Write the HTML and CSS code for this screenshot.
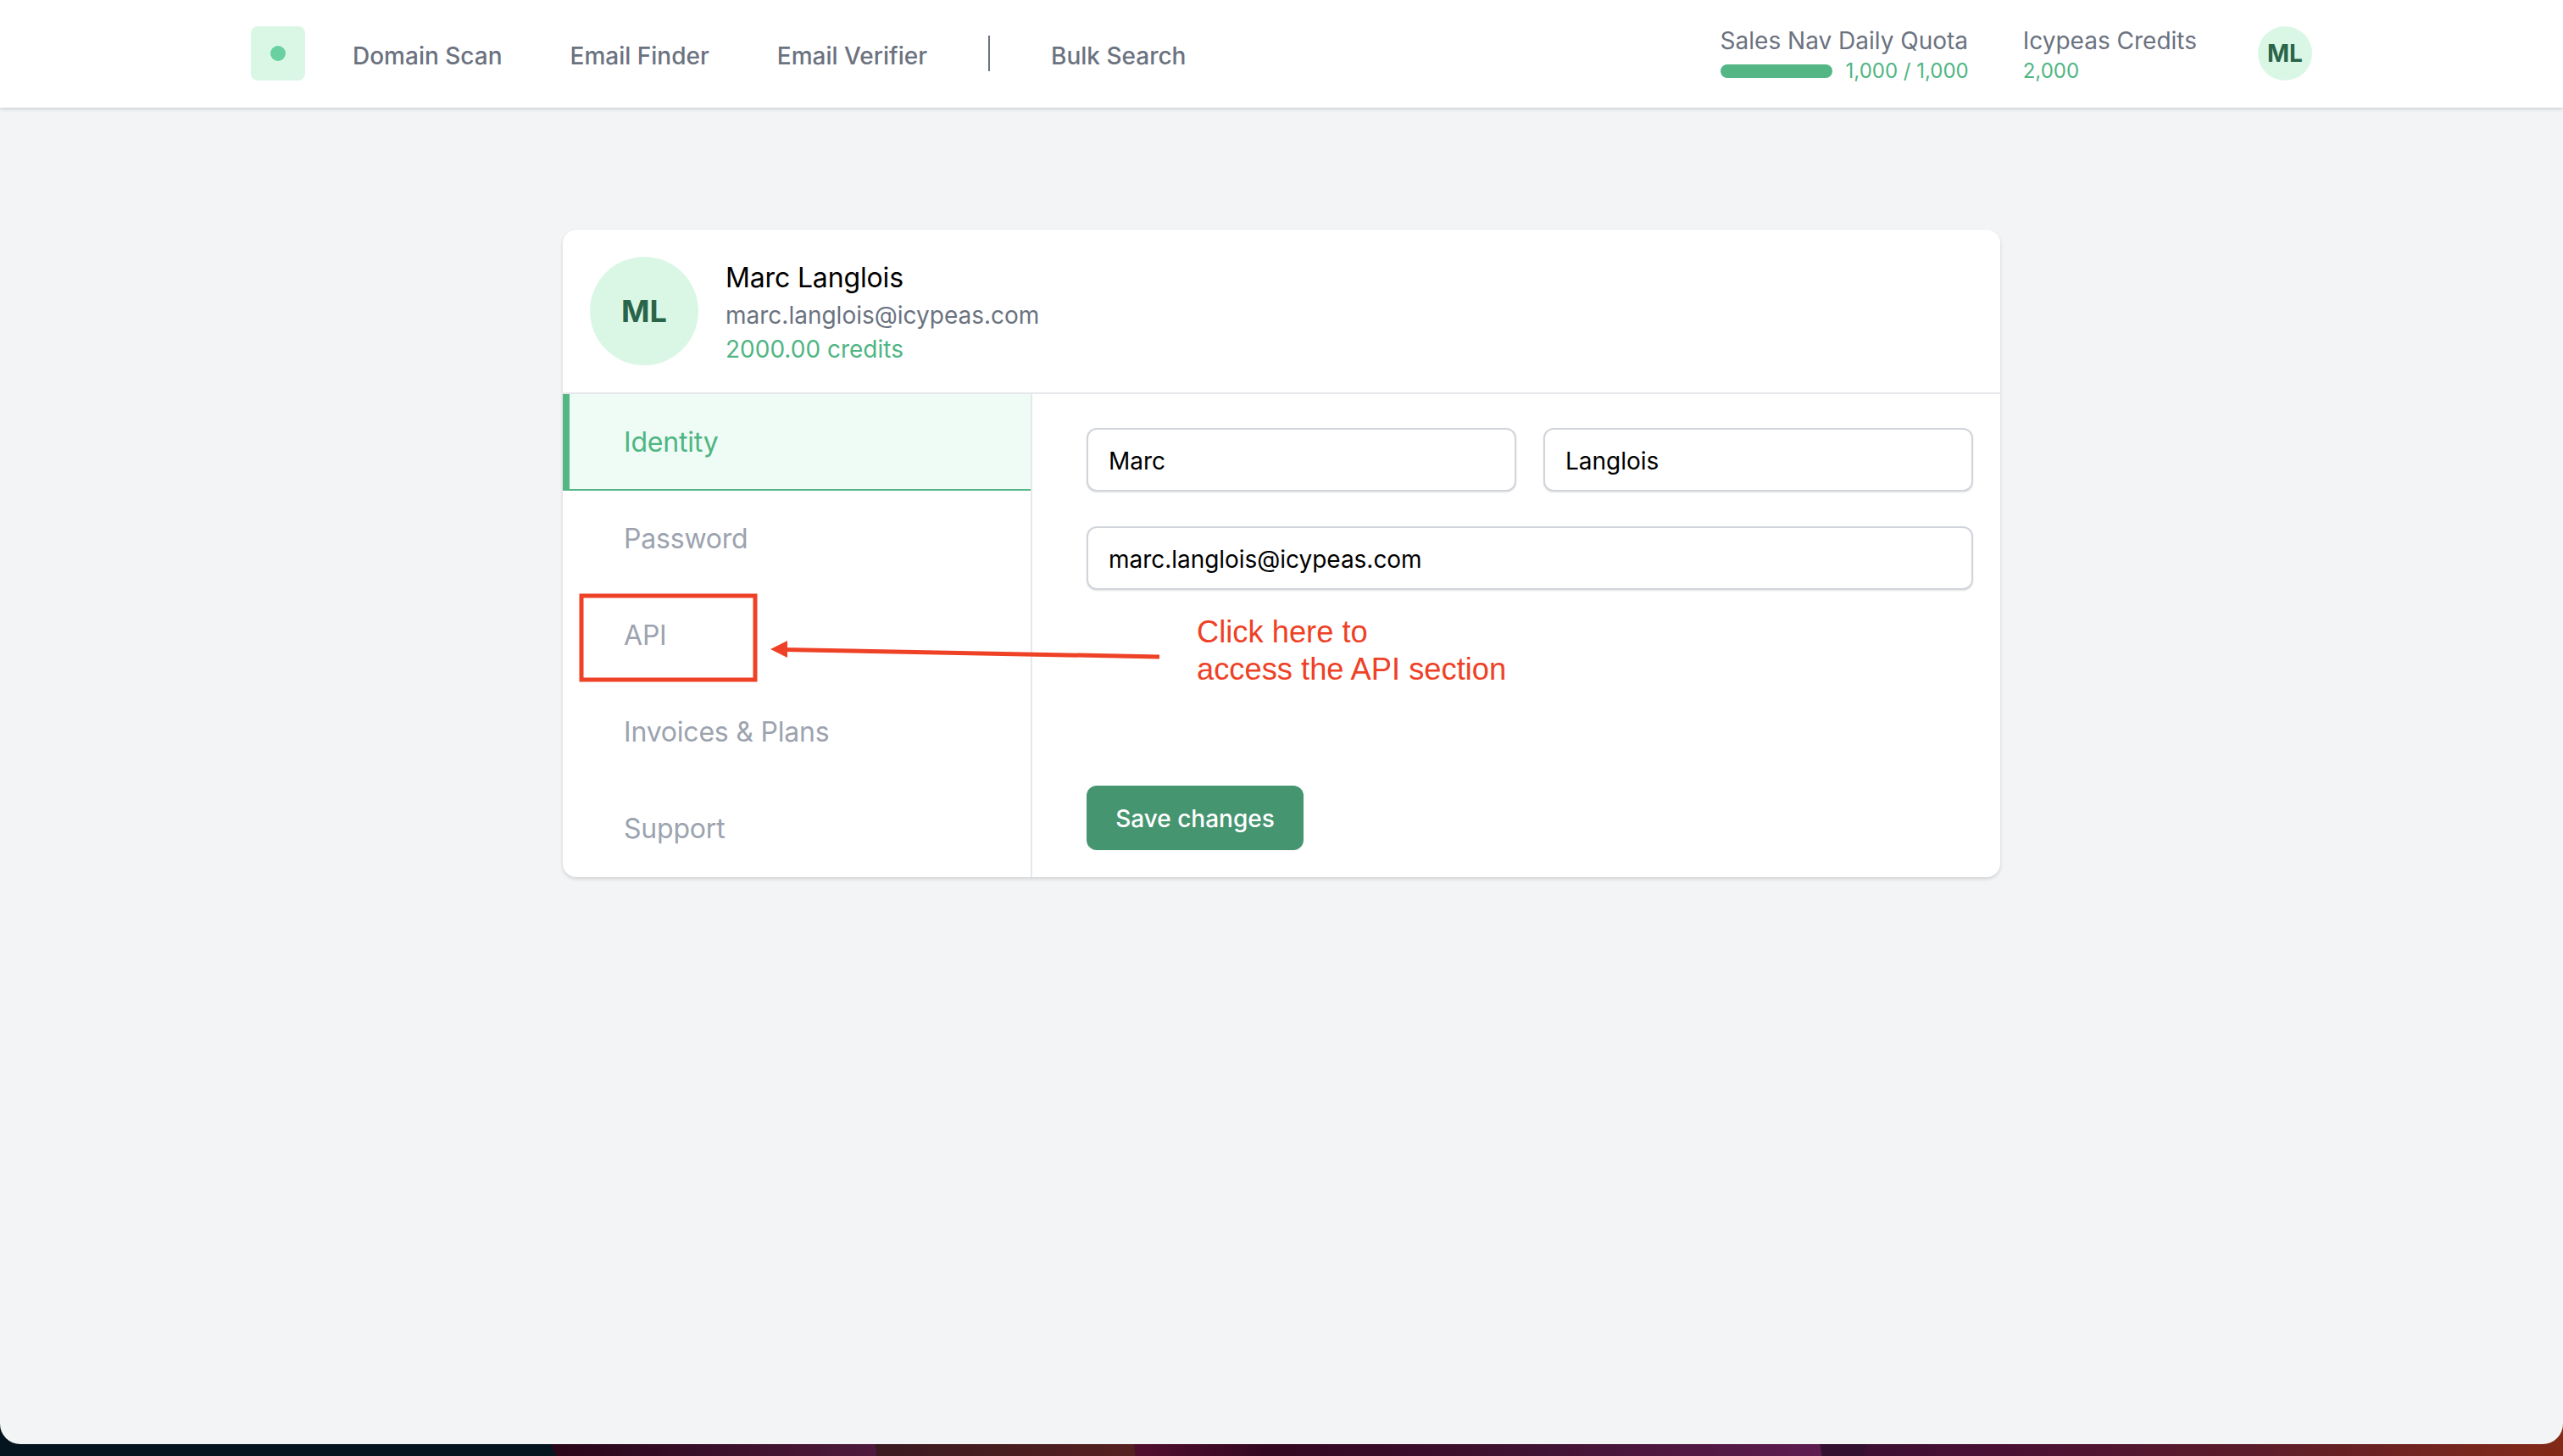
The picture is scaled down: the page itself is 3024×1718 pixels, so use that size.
FILE: index.html
```html
<!DOCTYPE html>
<html lang="en">
<head>
<meta charset="utf-8">
<title>Profile</title>
<link rel="stylesheet" href="styles.css">
</head>
<body>
<svg class="wallpaper" viewBox="0 1680 3024 38" preserveAspectRatio="none" aria-hidden="true">
  <defs>
    <linearGradient id="w1" x1="0" x2="1" y1="0" y2="0"><stop offset="0" stop-color="#2a0518"/><stop offset="0.25" stop-color="#2f0a20"/><stop offset="1" stop-color="#4f1a3c"/></linearGradient>
    <linearGradient id="w2" x1="0" x2="1" y1="0" y2="0"><stop offset="0" stop-color="#3a1a20"/><stop offset="1" stop-color="#562020"/></linearGradient>
    <linearGradient id="w3" x1="0" x2="1" y1="0" y2="0"><stop offset="0" stop-color="#520f30"/><stop offset="0.2" stop-color="#330720"/><stop offset="0.55" stop-color="#3e1230"/><stop offset="1" stop-color="#5e1c50"/></linearGradient>
    <linearGradient id="w4" x1="0" x2="1" y1="0" y2="0"><stop offset="0" stop-color="#3c0f32"/><stop offset="0.2" stop-color="#4a1034"/><stop offset="0.55" stop-color="#5a1c2a"/><stop offset="1" stop-color="#832a18"/></linearGradient>
  </defs>
  <rect x="0" y="1680" width="3024" height="38" fill="#041520"/>
  <polygon points="641,1680 656,1718 1035,1718 1030,1680" fill="url(#w1)"/>
  <polygon points="1030,1680 1035,1718 1340,1718 1335,1680" fill="url(#w2)"/>
  <polygon points="1335,1680 1340,1718 2150,1718 2143,1680" fill="url(#w3)"/>
  <polygon points="2143,1680 2150,1718 2197,1718 2208,1680" fill="#330f30"/>
  <polygon points="2208,1680 2197,1718 3024,1718 3024,1680" fill="url(#w4)"/>
</svg>

<div class="window">
  <header class="topbar">
    <div class="topbar-inner">
      <div class="logo"><span class="logo-dot"></span></div>
      <nav class="nav">
        <a class="nav-link">Domain Scan</a>
        <a class="nav-link">Email Finder</a>
        <a class="nav-link">Email Verifier</a>
        <span class="nav-sep"></span>
        <a class="nav-link">Bulk Search</a>
      </nav>
      <div class="stats">
        <div class="stat">
          <div class="stat-label">Sales Nav Daily Quota</div>
          <div class="stat-row"><span class="bar"></span><span class="stat-value">1,000 / 1,000</span></div>
        </div>
        <div class="stat">
          <div class="stat-label">Icypeas Credits</div>
          <div class="stat-row"><span class="stat-value">2,000</span></div>
        </div>
        <div class="avatar-small">ML</div>
      </div>
    </div>
  </header>

  <main class="main">
    <section class="card">
      <div class="card-head">
        <div class="avatar-large">ML</div>
        <div class="identity">
          <div class="identity-name">Marc Langlois</div>
          <div class="identity-mail">marc.langlois@icypeas.com</div>
          <div class="identity-credits">2000.00 credits</div>
        </div>
      </div>
      <div class="card-body">
        <aside class="side">
          <a class="side-item side-item-active">Identity</a>
          <a class="side-item">Password</a>
          <a class="side-item">API</a>
          <a class="side-item">Invoices &amp; Plans</a>
          <a class="side-item">Support</a>
        </aside>
        <div class="form">
          <div class="form-row">
            <div class="field">Marc</div>
            <div class="field">Langlois</div>
          </div>
          <div class="field">marc.langlois@icypeas.com</div>
          <button class="save" type="button">Save changes</button>
        </div>
      </div>
    </section>
  </main>

  <svg class="callout-lines" viewBox="0 0 3024 1718" aria-hidden="true">
    <rect x="686" y="703" width="205" height="99" fill="none" stroke="#ee4125" stroke-width="5"/>
    <line x1="1368" y1="775" x2="925" y2="766.5" stroke="#ee4125" stroke-width="5"/>
    <polygon points="909,766 929,756 929,776" fill="#ee4125"/>
  </svg>
  <div class="callout-text">Click here to<br>access the API section</div>
</div>
</body>
</html>
```

FILE: styles.css
```css
* { box-sizing: border-box; }

html, body { margin: 0; padding: 0; }

body {
  position: relative;
  width: 3024px;
  height: 1718px;
  overflow: hidden;
  background: #041520;
  font-family: Inter, "Liberation Sans", sans-serif;
}

.wallpaper {
  position: absolute;
  left: 0;
  bottom: 0;
  width: 3024px;
  height: 38px;
  display: block;
}

.window {
  position: relative;
  height: 1704px;
  background: #f3f4f6;
  border-radius: 0 0 24px 24px;
  overflow: hidden;
}

/* top bar */
.topbar {
  height: 127px;
  background: #fff;
  box-shadow: 0 2px 4px rgba(0, 0, 0, 0.14);
}

.topbar-inner {
  width: 2432px;
  margin: 0 auto;
  padding-top: 31px;
  display: flex;
  align-items: flex-start;
}

.logo {
  width: 64px;
  height: 64px;
  border-radius: 8px;
  background: #daf7e6;
  display: flex;
  align-items: center;
  justify-content: center;
}

.logo-dot {
  width: 18px;
  height: 18px;
  border-radius: 50%;
  background: #69d09f;
}

.nav {
  display: flex;
  align-items: center;
  height: 70px;
  margin-left: 56px;
  gap: 80px;
}

.nav-link {
  font-size: 28px;
  font-weight: 500;
  color: #6b7280;
  line-height: 40px;
}

.nav-sep {
  width: 2px;
  height: 42px;
  margin: -6px -8px 0 -8px;
  background: #6b7280;
}

.stats {
  margin-left: auto;
  display: flex;
  align-items: flex-start;
  gap: 64px;
}

.stat {
  display: flex;
  flex-direction: column;
}

.stat-label {
  font-size: 28px;
  line-height: 40px;
  margin-top: -3px;
  color: #6b7280;
}

.stat-row {
  display: flex;
  align-items: center;
  gap: 16px;
  height: 32px;
  margin-top: 0;
}

.bar {
  width: 132px;
  height: 16px;
  border-radius: 8px;
  background: #54b585;
}

.stat-value {
  font-size: 24px;
  line-height: 32px;
  color: #4fb583;
}

.avatar-small {
  width: 64px;
  height: 64px;
  margin-left: 8px;
  border-radius: 50%;
  background: #daf7e6;
  color: #2a6549;
  font-size: 28px;
  font-weight: 700;
  display: flex;
  align-items: center;
  justify-content: center;
}

/* card */
.main {
  padding-top: 144px;
}

.card {
  width: 1696px;
  margin: 0 auto;
  background: #fff;
  border-radius: 16px;
  box-shadow: 0 2px 4px rgba(0, 0, 0, 0.15);
  overflow: hidden;
}

.card-head {
  display: flex;
  align-items: center;
  gap: 32px;
  padding: 32px;
  border-bottom: 2px solid #e5e7eb;
  height: 194px;
}

.avatar-large {
  width: 128px;
  height: 128px;
  flex: none;
  border-radius: 50%;
  background: #daf7e6;
  color: #2a6549;
  font-size: 36px;
  font-weight: 700;
  display: flex;
  align-items: center;
  justify-content: center;
}

.identity {
  padding-top: 2px;
}

.identity-name {
  font-size: 32px;
  line-height: 48px;
  letter-spacing: -0.15px;
  color: #000;
}

.identity-mail {
  font-size: 28px;
  line-height: 40px;
  color: #6b7280;
}

.identity-credits {
  font-size: 28px;
  line-height: 40px;
  color: #4fb583;
}

.card-body {
  display: flex;
  height: 570px;
}

.side {
  width: 554px;
  flex: none;
  border-right: 2px solid #e5e7eb;
  display: flex;
  flex-direction: column;
}

.side-item {
  height: 114px;
  padding-left: 72px;
  padding-bottom: 2px;
  display: flex;
  align-items: center;
  font-size: 32px;
  letter-spacing: -0.2px;
  color: #9ca3af;
}

.side-item-active {
  padding-left: 64px;
  padding-bottom: 0;
  border-left: 8px solid #54b585;
  border-bottom: 2px solid #54b585;
  background: #eefcf5;
  color: #4fb583;
}

.form {
  flex: 1;
  padding: 40px 32px 32px 64px;
  display: flex;
  flex-direction: column;
  gap: 41px;
}

.form-row {
  display: grid;
  grid-template-columns: 1fr 1fr;
  gap: 32px;
}

.field {
  height: 75px;
  padding-left: 24px;
  padding-top: 2px;
  display: flex;
  align-items: center;
  font-size: 28px;
  letter-spacing: -0.03px;
  color: #000;
  background: #fff;
  border: 2px solid #d1d5db;
  border-radius: 12px;
  box-shadow: 0 1px 2px rgba(0, 0, 0, 0.12);
}

.save {
  margin-top: auto;
  align-self: flex-start;
  width: 256px;
  height: 76px;
  padding-top: 2px;
  border: 0;
  border-radius: 12px;
  background: #459570;
  color: #fff;
  font-family: inherit;
  font-size: 28px;
  font-weight: 500;
  box-shadow: 0 1px 2px rgba(0, 0, 0, 0.05);
}

/* annotation drawn over the page */
.callout-lines {
  position: absolute;
  left: 0;
  top: 0;
  width: 3024px;
  height: 1718px;
  pointer-events: none;
}

.callout-text {
  position: absolute;
  left: 1412px;
  top: 724px;
  font-family: "Liberation Sans", Arial, sans-serif;
  font-size: 36.3px;
  line-height: 44px;
  color: #ee4125;
}
```
